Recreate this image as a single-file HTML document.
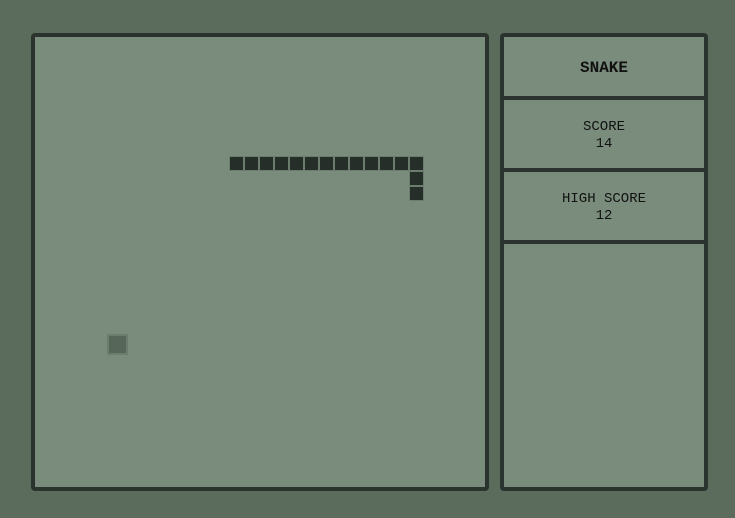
<!DOCTYPE html>
<html><head><style>
body{margin:0;width:735px;height:518px;background:#5b6b5c;position:relative;overflow:hidden;font-family:"Courier New","Courier","Nimbus Mono PS","Nimbus Mono L","FreeMono","Liberation Mono",monospace;color:#111}
.b{position:absolute;box-sizing:border-box;border:4px solid #2a332d;border-radius:4px;background:#7a8d7c}
.c{position:absolute;width:15px;height:15px;box-sizing:border-box;border:1px solid #6b7e6e;background:#252e29}
.d{position:absolute;left:0;right:0;height:4px;background:#2a332d}
.t{position:absolute;left:0;right:0;text-align:center;font-size:14px;line-height:17px}
</style></head><body>
<div class="b" style="left:31px;top:33px;width:458px;height:458px"></div>
<div class="b" style="left:500px;top:33px;width:208px;height:458px">
<div class="t" style="top:23px;font-weight:bold;font-size:16px">SNAKE</div>
<div class="d" style="top:59px"></div>
<div class="t" style="top:82px">SCORE<br>14</div>
<div class="d" style="top:131px"></div>
<div class="t" style="top:154px">HIGH SCORE<br>12</div>
<div class="d" style="top:203px"></div>
</div>
<div id="s"></div>
<div style="position:absolute;left:107px;top:334px;width:21px;height:21px;box-sizing:border-box;border:2px solid #6b7e6e;background:#56675a"></div>
<script>
var h='';for(var i=0;i<13;i++)h+='<div class="c" style="left:'+(229+15*i)+'px;top:156px"></div>';
h+='<div class="c" style="left:409px;top:171px"></div><div class="c" style="left:409px;top:186px"></div>';
document.getElementById('s').innerHTML=h;
</script>
</body></html>
